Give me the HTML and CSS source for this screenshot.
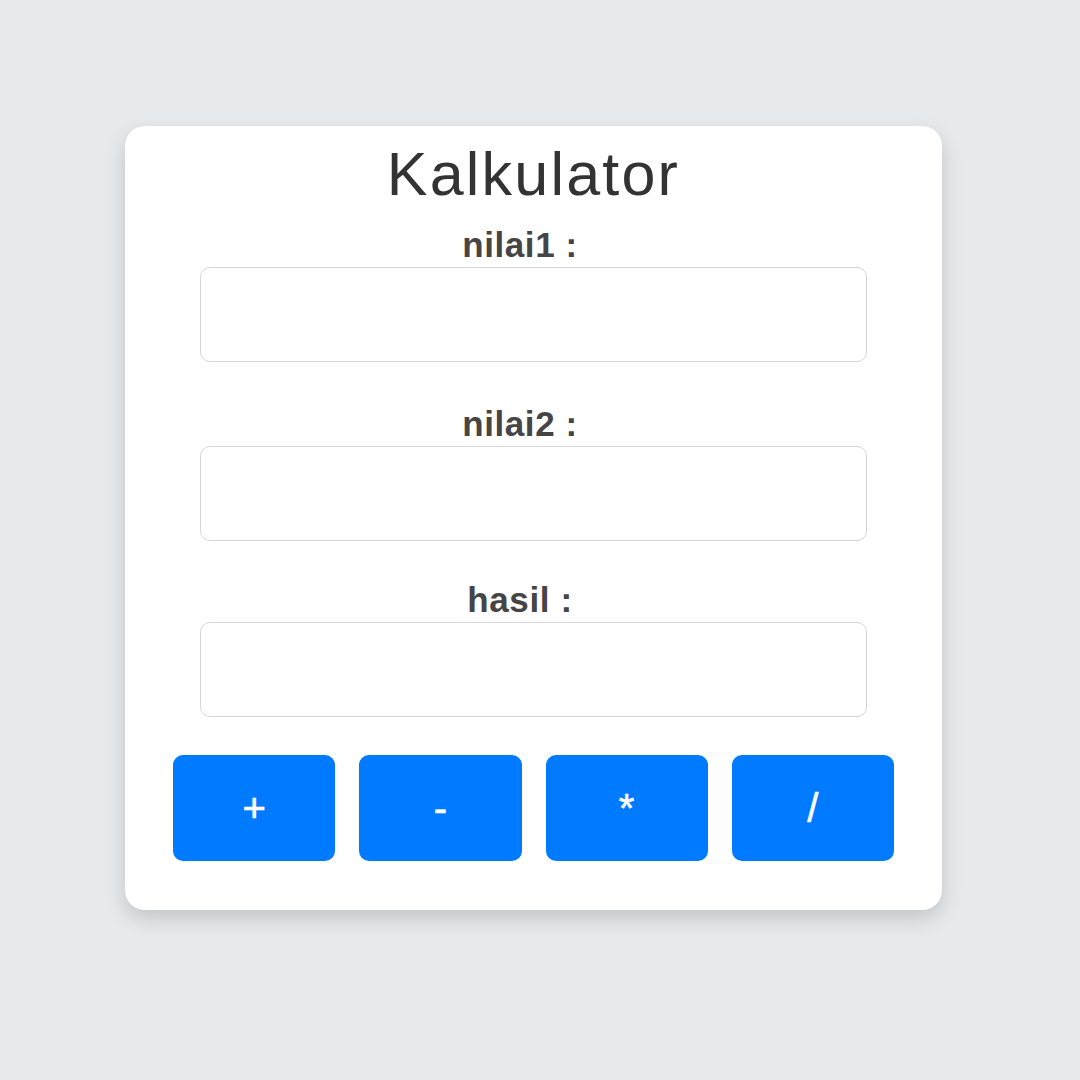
FILE: index.html
```html
<!DOCTYPE html>
<html lang="id">
<head>
<meta charset="utf-8">
<title>Kalkulator</title>
<link rel="stylesheet" href="styles.css">
</head>
<body>
  <div class="card">
    <h1 class="title">Kalkulator</h1>
    <form class="form">
      <div class="field field-1">
        <label class="label" for="n1">nilai1 :</label>
        <input class="input" id="n1" type="text">
      </div>
      <div class="field field-2">
        <label class="label" for="n2">nilai2 :</label>
        <input class="input" id="n2" type="text">
      </div>
      <div class="field field-3">
        <label class="label" for="res">hasil :</label>
        <input class="input" id="res" type="text">
      </div>
      <div class="buttons">
        <button type="button" class="btn">+</button>
        <button type="button" class="btn">-</button>
        <button type="button" class="btn">*</button>
        <button type="button" class="btn">/</button>
      </div>
    </form>
  </div>
</body>
</html>
```

FILE: styles.css
```css
html, body {
  margin: 0;
  padding: 0;
}
body {
  background: #e6eaed;
  font-family: "Liberation Sans", Arial, sans-serif;
  min-height: 1080px;
  padding: 126px 0 0 125px;
  box-sizing: border-box;
}
.card {
  width: 817px;
  box-sizing: border-box;
  background: #ffffff;
  border-radius: 20px;
  padding: 15px 48px 49px;
  box-shadow: 0 8px 20px rgba(0, 0, 0, 0.16);
}
.title {
  margin: 0;
  font-size: 61px;
  line-height: 66px;
  letter-spacing: 2.2px;
  font-weight: normal;
  color: #333333;
  text-align: center;
}
.form {
  display: flex;
  flex-direction: column;
  margin-top: 20px;
}
.field {
  display: flex;
  flex-direction: column;
  align-items: center;
}
.field-1 {
  margin-bottom: 44px;
}
.field-2 {
  margin-bottom: 41px;
}
.field-3 {
  margin-bottom: 38px;
}
.label {
  display: block;
  font-size: 35px;
  line-height: 36px;
  letter-spacing: 0.6px;
  font-weight: bold;
  color: #454545;
  padding-right: 27px;
  margin-bottom: 4px;
}
.input {
  width: 667px;
  height: 95px;
  box-sizing: border-box;
  border: 1px solid #d6d6d6;
  border-radius: 10px;
  background: #ffffff;
  margin: 0;
  padding: 0 14px;
  font-size: 28px;
  font-family: inherit;
}
.buttons {
  display: flex;
  gap: 24px;
}
.btn {
  flex: 1;
  height: 106px;
  border: none;
  border-radius: 10px;
  background: #007bff;
  color: #ffffff;
  font-family: inherit;
  font-size: 40px;
  padding: 0;
  margin: 0;
  -webkit-text-stroke: 0.6px #ffffff;
}
```
